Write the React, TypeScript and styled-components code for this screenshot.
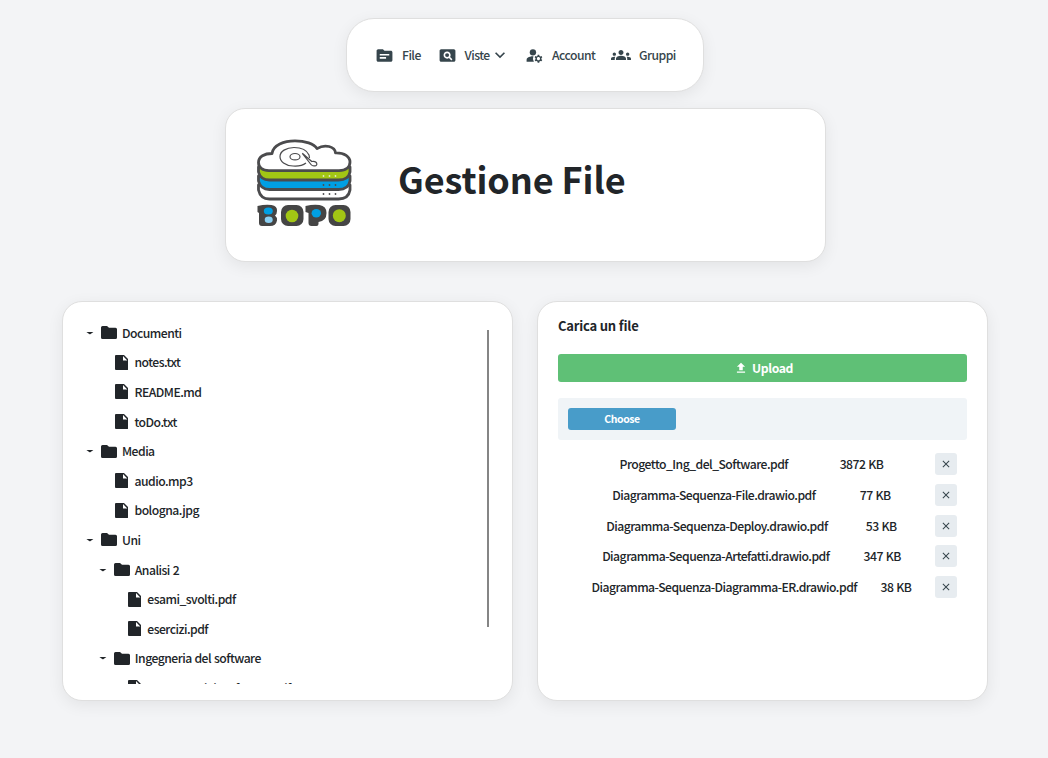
import React from 'react';
import styled, { createGlobalStyle } from 'styled-components';
import { MdTopic, MdPageview, MdManageAccounts, MdGroups, MdExpandMore, MdUpload, MdClose } from 'react-icons/md';

const GlobalStyle = createGlobalStyle`
  * { box-sizing: border-box; }
  body {
    margin: 0;
    background: #f3f4f6;
    color: #212529;
    font-family: "Noto Sans CJK SC", "Noto Sans", sans-serif;
    font-size: 12.2px;
    font-weight: 500;
    line-height: 20px;
    letter-spacing: -0.52px;
    word-spacing: 0.6px;
    font-feature-settings: "liga" 1;
  }
`;

const Page = styled.div`
  display: flex;
  flex-direction: column;
  align-items: center;
  height: 758px;
  padding-top: 18px;
  overflow: hidden;
`;

const Card = styled.section`
  background: #fff;
  border: 1px solid #dfdfdf;
  border-radius: 20px;
  box-shadow: 0 4px 16px rgba(0, 0, 0, 0.07);
`;

const NavBar = styled(Card).attrs({ as: 'nav' })`
  display: flex;
  align-items: center;
  width: 358px;
  height: 74px;
  margin-left: 2px;
  padding-left: 28px;
  border-radius: 28px;
  color: #36454c;
`;

const NavItem = styled.a<{ $width: number; $gap: number }>`
  display: flex;
  align-items: center;
  flex: none;
  gap: ${(p) => p.$gap}px;
  width: ${(p) => p.$width}px;
  white-space: nowrap;
  svg { flex: none; }
`;

const NavLabel = styled.span`
  display: flex;
  align-items: center;
`;

const Header = styled(Card).attrs({ as: 'header' })`
  display: flex;
  align-items: center;
  width: 601px;
  height: 154px;
  margin: 16px 0 0 3px;
  padding-left: 30px;
`;

const Title = styled.h1`
  margin: 0 0 14px 44px;
  font-size: 36px;
  line-height: 56px;
  font-weight: 700;
  letter-spacing: -0.1px;
  word-spacing: 0;
`;

const Columns = styled.main`
  display: flex;
  gap: 24px;
  margin: 39px 0 0 2px;
`;

const TreeCard = styled(Card)`
  display: flex;
  width: 451px;
  height: 400px;
  padding: 16px 23px;
`;

const Tree = styled.div`
  flex: 1;
  height: 366px;
  overflow: hidden;
`;

const TreeRow = styled.div<{ $indent: number }>`
  display: flex;
  align-items: center;
  height: 29.6px;
  padding-left: ${(p) => p.$indent}px;
  white-space: nowrap;
`;

const Scrollbar = styled.div`
  width: 2px;
  height: 297px;
  margin-top: 12px;
  background: #858585;
`;

const UploadCard = styled(Card)`
  width: 451px;
  height: 400px;
  padding: 14px 20px;
`;

const Subtitle = styled.h2`
  margin: 0;
  font-size: 13px;
  line-height: 20px;
  font-weight: 700;
  letter-spacing: -0.2px;
  word-spacing: 0;
`;

const UploadButton = styled.button`
  display: flex;
  align-items: center;
  justify-content: center;
  gap: 4px;
  width: 409px;
  height: 28px;
  margin-top: 18px;
  padding: 0 0 0 2px;
  border: 0;
  border-radius: 3px;
  background: #5fc076;
  color: #fff;
  font: 700 12.2px/20px "Noto Sans CJK SC", sans-serif;
  letter-spacing: -0.35px;
`;

const ChooseBar = styled.div`
  height: 42px;
  margin-top: 16px;
  padding: 10px;
  border-radius: 3px;
  background: #f0f4f7;
`;

const ChooseButton = styled.button`
  display: block;
  width: 108px;
  height: 22px;
  padding: 0 0 1px;
  border: 0;
  border-radius: 3px;
  background: #489cc9;
  color: #fff;
  font: 700 10.5px/20px "Noto Sans CJK SC", sans-serif;
  letter-spacing: -0.4px;
`;

const FileList = styled.div`
  display: flex;
  flex-direction: column;
  gap: 8.7px;
  padding: 13.4px 10px 0;
`;

const FileRow = styled.div`
  display: flex;
  align-items: center;
  justify-content: space-between;
  height: 22px;
  white-space: nowrap;
  &::before { content: ''; }
`;

const RemoveButton = styled.button`
  display: grid;
  place-items: center;
  width: 22px;
  height: 22px;
  padding: 0;
  border: 0;
  border-radius: 3px;
  background: #e7ecf0;
  color: #36454c;
`;

const TreeIcon = styled.svg<{ $after: number }>`
  flex: none;
  margin-right: ${(p) => p.$after}px;
  fill: #212529;
`;

const Caret = () => (
  <TreeIcon $after={7} width="8" height="4" viewBox="0 0 8 4">
    <path d="M.4.9h7L4.6 3q-.7.5-1.4 0z" />
  </TreeIcon>
);

const FolderIcon = () => (
  <TreeIcon $after={5} width="16" height="13" viewBox="0 0 16 13">
    <path d="M1.5 0H6l2 1.800h6.500Q16 1.800 16 3.300v8.200q0 1.500-1.500 1.500h-13Q0 13 0 11.500v-10Q0 0 1.500 0z" />
  </TreeIcon>
);

const FileIcon = () => (
  <TreeIcon $after={6.2} width="13.5" height="15" viewBox="0 0 13.5 15">
    <path fillRule="evenodd" d="M1 0h8l4.300 4.300V14q0 1-1 1H1q-1 0-1-1V1q0-1 1-1zM8 1v4.400h4.300z" />
  </TreeIcon>
);

const tree = [
  { name: 'Documenti', folder: true, level: 0 },
  { name: 'notes.txt', level: 1 },
  { name: 'README.md', level: 1 },
  { name: 'toDo.txt', level: 1 },
  { name: 'Media', folder: true, level: 0 },
  { name: 'audio.mp3', level: 1 },
  { name: 'bologna.jpg', level: 1 },
  { name: 'Uni', folder: true, level: 0 },
  { name: 'Analisi 2', folder: true, level: 1 },
  { name: 'esami_svolti.pdf', level: 2 },
  { name: 'esercizi.pdf', level: 2 },
  { name: 'Ingegneria del software', folder: true, level: 1 },
  { name: 'progetto_del_software.pdf', level: 2 },
];

const files = [
  ['Progetto_Ing_del_Software.pdf', '3872 KB'],
  ['Diagramma-Sequenza-File.drawio.pdf', '77 KB'],
  ['Diagramma-Sequenza-Deploy.drawio.pdf', '53 KB'],
  ['Diagramma-Sequenza-Artefatti.drawio.pdf', '347 KB'],
  ['Diagramma-Sequenza-Diagramma-ER.drawio.pdf', '38 KB'],
];

const Logo = () => (
  <svg width="98" height="92" viewBox="0 0 98 92">
    <g stroke="#4b4b4d" strokeWidth="2.8" strokeLinejoin="round">
      <path d="M2.500 46v5q2 9 11 9h69q10 0 11.500-9v-5z" fill="#fff" />
      <path d="M2.500 37v5q2 8.500 11 8.500h69q10 0 11.500-8.500v-5z" fill="#009fe3" />
      <path d="M2.500 28v5q2 8 11 8h69q10 0 11.500-8v-5z" fill="#a2c614" />
      <path d="M13 31.700C6 31.700 2.500 28 2.500 23.500c0-6 6-9 13.500-9C17 6 28 1.800 39 1.800c10 0 19 3 22 7.800 8-5 18-2 18.500 4.200C88.500 13.500 94 18 94 23c0 5-4 8.700-11 8.700z" fill="#fff" />
    </g>
    <g fill="none" stroke="#4b4b4d" strokeWidth="1.2">
      <path d="M50 24c-4 3-9 3.300-13 3-8-.5-13-4.500-13-9.500s6-9 14-9c7.500 0 13 3 15 7.500l.5 3" />
      <ellipse cx="39" cy="17.700" rx="5" ry="3.200" />
      <path d="M46.300 14.300l8.700 11.200c2 2.500 6.500 1.500 5.800-1-.5-2-3-2.300-5-2z" fill="#fff" />
    </g>
    {[37, 46, 55].map((y) => [67.5, 73.5, 79.5].map((x) => (
      <circle key={`${x}-${y}`} cx={x} cy={y} r="0.9" fill={y === 37 ? '#e4e8c8' : '#4b4b4d'} />
    )))}
    <g fill="#454545">
      <path d="M1.500 67q8-2 14-1 6 1 5.500 6 0 3-2 4.500 2.500 2 2 5-1 5.500-7 5.500H6q-3 0-3-3V74l-1.500-1z" />
      <rect x="25" y="66" width="22.500" height="21" rx="7" />
      <path d="M49.500 67q8-2 14-1 7 1 7 8 0 8-8 9v2q0 2-2 2h-5q-3 0-3-3V74l-3-1z" />
      <rect x="72.500" y="66" width="22" height="21" rx="7" />
    </g>
    <ellipse cx="12.300" cy="72" rx="4.500" ry="3.500" fill="#009fe3" />
    <ellipse cx="12.700" cy="80.700" rx="4" ry="3.300" fill="#8bd0f3" />
    <ellipse cx="60.300" cy="74.300" rx="4.700" ry="4.200" fill="#009fe3" />
    <circle cx="36" cy="77" r="6.300" fill="#a2c614" />
    <circle cx="83.300" cy="76.700" r="6.500" fill="#a2c614" />
  </svg>
);

export default function App() {
  return (
    <Page>
      <GlobalStyle />
      <NavBar>
        <NavItem $width={62.5} $gap={8}><MdTopic size={19} />File</NavItem>
        <NavItem $width={87.5} $gap={8}><MdPageview size={19} /><NavLabel>Viste<MdExpandMore size={20} /></NavLabel></NavItem>
        <NavItem $width={86} $gap={8}><MdManageAccounts size={19} />Account</NavItem>
        <NavItem $width={66} $gap={8}><MdGroups size={20} />Gruppi</NavItem>
      </NavBar>
      <Header>
        <Logo />
        <Title>Gestione File</Title>
      </Header>
      <Columns>
        <TreeCard>
          <Tree>
            {tree.map((n) => (
              <TreeRow key={n.name} $indent={n.level * 12.8 + (n.folder ? 0 : 16)}>
                {n.folder ? <><Caret /><FolderIcon /></> : <FileIcon />}
                {n.name}
              </TreeRow>
            ))}
          </Tree>
          <Scrollbar />
        </TreeCard>
        <UploadCard>
          <Subtitle>Carica un file</Subtitle>
          <UploadButton><MdUpload size={14} />Upload</UploadButton>
          <ChooseBar><ChooseButton>Choose</ChooseButton></ChooseBar>
          <FileList>
            {files.map(([name, size]) => (
              <FileRow key={name}>
                <span>{name}</span>
                <span>{size}</span>
                <RemoveButton aria-label="Rimuovi"><MdClose size={12} /></RemoveButton>
              </FileRow>
            ))}
          </FileList>
        </UploadCard>
      </Columns>
    </Page>
  );
}
